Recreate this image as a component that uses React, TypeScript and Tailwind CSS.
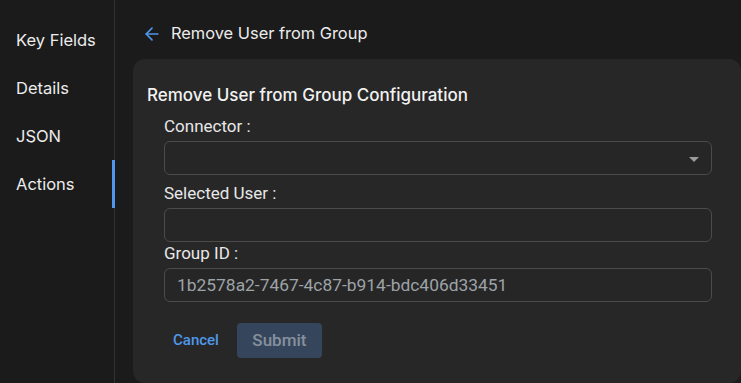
import { ArrowLeft } from "lucide-react";

const navItems = ["Key Fields", "Details", "JSON", "Actions"];

function Sidebar({ active }: { active: string }) {
  return (
    <aside className="w-[115px] shrink-0 border-r border-[#323232] bg-[#1b1b1b] pt-[16px]">
      {navItems.map((item) => (
        <div
          key={item}
          className="relative flex h-[48px] items-center pl-[16px] text-[16.5px] text-[#ececec]"
        >
          {item}
          {item === active && (
            <span className="absolute right-[-1px] top-0 h-full w-[3px] bg-[#4f97ea]" />
          )}
        </div>
      ))}
    </aside>
  );
}

function Field({
  label,
  children,
  className,
}: {
  label: string;
  children: React.ReactNode;
  className?: string;
}) {
  return (
    <div className={className}>
      <div className="h-[20px] text-[17px] leading-[20px] text-[#e8e8e8] [font-family:Roboto,'Liberation_Sans',sans-serif]">
        {label}
      </div>
      <div className="mt-[5px]">{children}</div>
    </div>
  );
}

export default function App() {
  return (
    <div className="flex h-[383px] w-[741px] overflow-hidden bg-[#1b1b1b] [font-family:Inter,'Noto_Sans',sans-serif]">
      <Sidebar active="Actions" />

      <main className="flex min-w-0 flex-1 flex-col pl-[18px]">
        {/* header */}
        <div className="flex h-[59px] items-center pt-[8px]">
          <ArrowLeft className="ml-[9px] h-[20px] w-[20px] text-[#4f97ea]" strokeWidth={2} />
          <span className="ml-[9px] text-[16.4px] text-[#ececec]">Remove User from Group</span>
        </div>

        {/* card */}
        <section className="flex-1 rounded-[12px] bg-[#272727] pl-[14px] pr-[29px] pt-[24px]">
          <h2 className="h-[24px] text-[17px] font-medium leading-[24px] text-[#f2f2f2]">
            Remove User from Group Configuration
          </h2>

          <div className="mt-[9px] pl-[17px]">
            <Field label="Connector :">
              <div className="relative h-[34px] rounded-[6px] border border-[#4b4b4b] bg-[#262626]">
                <span className="absolute right-[12px] top-[15px] h-0 w-0 border-l-[5px] border-r-[5px] border-t-[5px] border-l-transparent border-r-transparent border-t-[#9a9a9a]" />
              </div>
            </Field>

            <Field label="Selected User :" className="mt-[8px]">
              <div className="h-[34px] rounded-[6px] border border-[#4b4b4b] bg-[#262626]" />
            </Field>

            <Field label="Group ID :" className="mt-[1px]">
              <div className="flex h-[34px] items-center rounded-[6px] border border-[#4b4b4b] bg-[#262626] pl-[12px] text-[17.4px] text-[#9ea3a8] [font-family:Roboto,'Liberation_Sans',sans-serif]">
                1b2578a2-7467-4c87-b914-bdc406d33451
              </div>
            </Field>

            <div className="mt-[21px] flex items-center [font-family:Roboto,'Liberation_Sans',sans-serif]">
              <button className="ml-[9px] text-[15px] font-medium text-[#4f97ea]">Cancel</button>
              <button className="ml-[18px] h-[35px] w-[85px] rounded-[4px] bg-[#35465c] text-[17px] font-medium text-[#86909c]">
                Submit
              </button>
            </div>
          </div>
        </section>
      </main>
    </div>
  );
}
